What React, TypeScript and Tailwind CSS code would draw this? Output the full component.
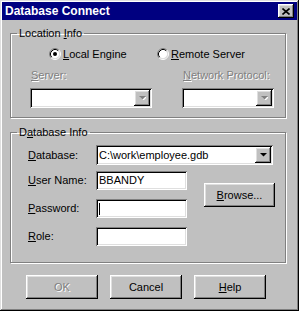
import React from "react";

const raised =
  "shadow-[inset_-1px_-1px_#000,inset_1px_1px_#fff,inset_-2px_-2px_#808080,inset_2px_2px_#dfdfdf]";
const sunken =
  "shadow-[inset_1px_1px_#808080,inset_-1px_-1px_#fff,inset_2px_2px_#000,inset_-2px_-2px_#dfdfdf]";
const grayed = "text-[#808080] [text-shadow:1px_1px_0_#fff]";

const Radio = ({ checked }: { checked?: boolean }) => (
  <svg width="12" height="12" viewBox="0 0 12 12" className="shrink-0">
    <circle cx="6" cy="6" r="4.5" fill="#fff" />
    <path d="M2.11 9.89A5.5 5.5 0 0 1 9.89 2.11" stroke="#808080" fill="none" />
    <path d="M9.89 2.11A5.5 5.5 0 0 1 2.11 9.89" stroke="#fff" fill="none" />
    <path d="M2.82 9.18A4.5 4.5 0 0 1 9.18 2.82" stroke="#000" fill="none" />
    <path d="M9.18 2.82A4.5 4.5 0 0 1 2.82 9.18" stroke="#dfdfdf" fill="none" />
    {checked && <circle cx="6" cy="6" r="2" fill="#000" />}
  </svg>
);

const Arrow = ({ disabled }: { disabled?: boolean }) => (
  <div className={`w-[16px] h-full bg-[#c0c0c0] flex items-center justify-center ${raised}`}>
    <svg width="7" height="4" viewBox="0 0 7 4">
      {disabled && <path d="M1 1h7L4.5 4.5z" fill="#fff" />}
      <path d="M0 0h7L3.5 3.5z" fill={disabled ? "#808080" : "#000"} />
    </svg>
  </div>
);

const Combo = ({ value, disabled, className }: { value?: string; disabled?: boolean; className: string }) => (
  <div className={`h-[20px] bg-white p-[2px] flex ${sunken} ${className}`}>
    <div className="flex-1 pl-[1px] leading-[16px] whitespace-nowrap overflow-hidden">{value}</div>
    <Arrow disabled={disabled} />
  </div>
);

const Field = ({ value, caret }: { value?: string; caret?: boolean }) => (
  <div className={`w-[91px] h-[19px] bg-white px-[3px] flex items-center ${sunken}`}>
    {value}
    {caret && <div className="w-[1px] h-[12px] bg-black" />}
  </div>
);

const Button = ({ children, disabled, className = "" }: { children: React.ReactNode; disabled?: boolean; className?: string }) => (
  <div className={`h-[24px] bg-[#c0c0c0] flex items-center justify-center ${raised} ${disabled ? grayed : ""} ${className}`}>
    {children}
  </div>
);

const Row = ({ label, children }: { label: React.ReactNode; children: React.ReactNode }) => (
  <div className="flex items-center">
    <div className="w-[68px]">{label}</div>
    {children}
  </div>
);

export default function App() {
  return (
    <div className="w-[299px] h-[311px] bg-[#c0c0c0] p-[2px] flex flex-col text-[11px] leading-[13px] text-black font-['Liberation_Sans',Arial,sans-serif] shadow-[inset_-1px_-1px_#000,inset_1px_1px_#dfdfdf,inset_-2px_-2px_#808080,inset_2px_2px_#fff]">
      {/* Title */}
      <div className="h-[18px] bg-[#000080] flex items-center justify-between pl-[3px] pr-[3px]">
        <span className="text-white font-bold text-[12px]">Database Connect</span>
        <div className={`w-[16px] h-[14px] bg-[#c0c0c0] flex items-center justify-center ${raised}`}>
          <svg width="8" height="7" viewBox="0 0 8 7">
            <path d="M0.5 0.5L7.5 6.5M7.5 0.5L0.5 6.5" stroke="#000" strokeWidth="1.6" />
          </svg>
        </div>
      </div>

      <div className="pl-[8px] flex flex-col">
        {/* Location Info */}
        <fieldset className="mt-[6px] w-[276px] border border-[#808080] shadow-[inset_1px_1px_#fff,1px_1px_#fff] pl-[19px] pt-[7px] pb-[9px]">
          <legend className="-ml-[13px] px-[2px] leading-[14px]">
            Location <u>I</u>nfo
          </legend>
          <div className="flex items-center h-[14px] pl-[19px]">
            <div className="w-[108px] flex items-center gap-[2px]">
              <Radio checked />
              <span>
                <u>L</u>ocal Engine
              </span>
            </div>
            <div className="flex items-center gap-[2px]">
              <Radio />
              <span>
                <u>R</u>emote Server
              </span>
            </div>
          </div>
          <div className="flex gap-[30px] mt-[8px]">
            <div className="w-[122px] flex flex-col gap-[6px]">
              <span className={`pl-[1px] ${grayed}`}>
                <u>S</u>erver:
              </span>
              <Combo disabled className="w-[122px]" />
            </div>
            <div className="w-[92px] flex flex-col gap-[6px]">
              <span className={`pl-[1px] ${grayed}`}>
                <u>N</u>etwork Protocol:
              </span>
              <Combo disabled className="w-[92px]" />
            </div>
          </div>
        </fieldset>

        {/* Database Info */}
        <fieldset className="mt-[7px] w-[276px] border border-[#808080] shadow-[inset_1px_1px_#fff,1px_1px_#fff] pl-[17px] pt-[6px] pb-[16px]">
          <legend className="-ml-[11px] px-[2px] leading-[14px]">
            D<u>a</u>tabase Info
          </legend>
          <Row
            label={
              <>
                <u>D</u>atabase:
              </>
            }
          >
            <Combo value="C:\work\employee.gdb" className="w-[177px]" />
          </Row>
          <div className="flex mt-[6px]">
            <div className="flex flex-col gap-[9px]">
              <Row
                label={
                  <>
                    <u>U</u>ser Name:
                  </>
                }
              >
                <Field value="BBANDY" />
              </Row>
              <Row
                label={
                  <>
                    <u>P</u>assword:
                  </>
                }
              >
                <Field caret />
              </Row>
              <Row
                label={
                  <>
                    <u>R</u>ole:
                  </>
                }
              >
                <Field />
              </Row>
            </div>
            <Button className="w-[71px] h-[23px] ml-[17px] mt-[12px]">
              <span>
                <u>B</u>rowse...
              </span>
            </Button>
          </div>
        </fieldset>

        {/* Buttons */}
        <div className="flex gap-[12px] pl-[16px] mt-[12px]">
          <Button disabled className="w-[72px]">
            OK
          </Button>
          <Button className="w-[72px]">Cancel</Button>
          <Button className="w-[72px]">
            <span>
              <u>H</u>elp
            </span>
          </Button>
        </div>
      </div>
    </div>
  );
}
